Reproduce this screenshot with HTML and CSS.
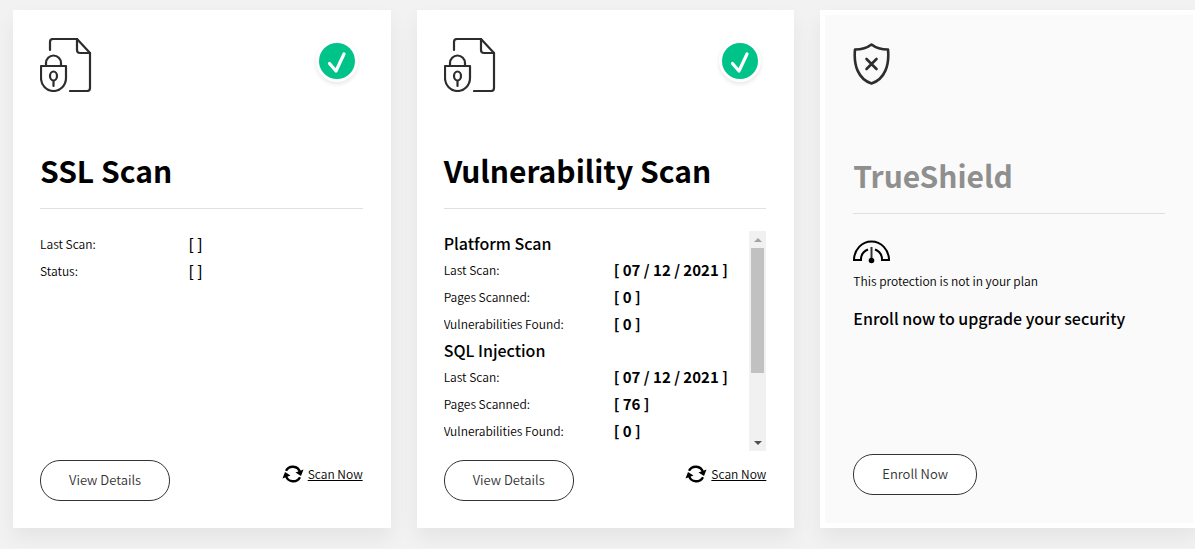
FILE: index.html
```html
<!DOCTYPE html>
<html lang="en">
<head>
<meta charset="utf-8">
<title>Security Dashboard</title>
<link rel="stylesheet" href="styles.css">
</head>
<body>

<!-- shared icons -->
<svg class="sprite" aria-hidden="true">
  <symbol id="icon-file-lock" viewBox="0 0 52 54">
    <g fill="none" stroke="#2d2d2d" stroke-width="2.200" stroke-linecap="round" stroke-linejoin="round">
      <path d="M10 12V4q0-3 3-3H37L50 15V50q0 3-3 3H30"/>
      <path d="M37 1V12q0 3 3 3H50"/>
      <path d="M1 28H26V40a12.500 13 0 0 1-25 0Z"/>
      <path d="M6 28V25a7.500 7.500 0 0 1 15 0v3"/>
      <ellipse cx="13.500" cy="38" rx="3.500" ry="4.500"/>
      <path d="M13.500 43v5"/>
    </g>
  </symbol>
  <symbol id="icon-check" viewBox="0 0 36 36">
    <circle cx="18" cy="18" r="18" fill="#00c389"/>
    <path d="M10.500 20.500l6.500 7.500L25 11" fill="none" stroke="#fff" stroke-width="3.200" stroke-linecap="round" stroke-linejoin="round"/>
  </symbol>
  <symbol id="icon-refresh" viewBox="0 0 22 18">
    <g fill="none" stroke="#000" stroke-width="2.400">
      <path d="M4 5.800A7.600 7.600 0 0 1 18 7"/>
      <path d="M18 12.200A7.600 7.600 0 0 1 4 11"/>
    </g>
    <path d="M21.500 4.500L19 11L13.500 7.500Z"/>
    <path d="M0.500 13.500L3 7L8.500 10.500Z"/>
  </symbol>
</svg>

<div class="cards">

  <section class="card">
    <div class="card-top">
      <svg class="icon-file" aria-hidden="true"><use href="#icon-file-lock"/></svg>
      <span class="badge"><svg aria-hidden="true"><use href="#icon-check"/></svg></span>
    </div>
    <h2>SSL Scan</h2>
    <div class="card-body">
      <div class="scroll-content">
        <dl class="rows">
          <dt>Last Scan:</dt><dd>[ ]</dd>
          <dt>Status:</dt><dd>[ ]</dd>
        </dl>
      </div>
    </div>
    <div class="card-footer">
      <button class="btn" type="button">View Details</button>
      <a class="scan-link" href="#"><svg aria-hidden="true"><use href="#icon-refresh"/></svg><span>Scan Now</span></a>
    </div>
  </section>

  <section class="card">
    <div class="card-top">
      <svg class="icon-file" aria-hidden="true"><use href="#icon-file-lock"/></svg>
      <span class="badge"><svg aria-hidden="true"><use href="#icon-check"/></svg></span>
    </div>
    <h2>Vulnerability Scan</h2>
    <div class="card-body">
      <div class="scroll-content">
        <h3>Platform Scan</h3>
        <dl class="rows wide">
          <dt>Last Scan:</dt><dd>[ 07 / 12 / 2021 ]</dd>
          <dt>Pages Scanned:</dt><dd>[ 0 ]</dd>
          <dt>Vulnerabilities Found:</dt><dd>[ 0 ]</dd>
        </dl>
        <h3>SQL Injection</h3>
        <dl class="rows wide">
          <dt>Last Scan:</dt><dd>[ 07 / 12 / 2021 ]</dd>
          <dt>Pages Scanned:</dt><dd>[ 76 ]</dd>
          <dt>Vulnerabilities Found:</dt><dd>[ 0 ]</dd>
        </dl>
      </div>
      <div class="scrollbar" aria-hidden="true">
        <span class="arrow up"></span>
        <div class="track"><div class="thumb"></div></div>
        <span class="arrow down"></span>
      </div>
    </div>
    <div class="card-footer">
      <button class="btn" type="button">View Details</button>
      <a class="scan-link" href="#"><svg aria-hidden="true"><use href="#icon-refresh"/></svg><span>Scan Now</span></a>
    </div>
  </section>

  <section class="card disabled">
    <div class="card-top">
      <svg class="icon-shield" viewBox="0 0 37 42" aria-hidden="true">
        <g fill="none" stroke="#2d2d2d" stroke-width="2.600" stroke-linecap="round" stroke-linejoin="round">
          <path d="M18.500 1.500C14 5 8 6.500 2 6.500C0.500 22 5 36 18.500 40.500C32 36 36.500 22 35 6.500C29 6.500 23 5 18.500 1.500Z"/>
          <path d="M13.500 16l10 10M23.500 16l-10 10"/>
        </g>
      </svg>
    </div>
    <h2>TrueShield</h2>
    <div class="plan">
      <svg class="icon-gauge" viewBox="0 0 37 24" aria-hidden="true">
        <g fill="none" stroke="#000" stroke-width="2">
          <path d="M15 9.500A11 11 0 0 0 8 20H1a17.500 18.500 0 0 1 35 0H29A11 11 0 0 0 22 9.500"/>
          <path d="M18.500 7v13" stroke="#333"/>
        </g>
        <circle cx="18.500" cy="20.500" r="2.800"/>
      </svg>
      <p class="note">This protection is not in your plan</p>
      <p class="upgrade">Enroll now to upgrade your security</p>
    </div>
    <div class="card-footer">
      <button class="btn" type="button">Enroll Now</button>
    </div>
  </section>

</div>

</body>
</html>
```
FILE: styles.css
```css
* {
  box-sizing: border-box;
}

body {
  margin: 0;
  background-color: #f2f2f2;
  color: #000;
  font-family: "Noto Sans CJK SC", "Open Sans", sans-serif;
  font-size: 12px;
  font-weight: 350;
  overflow: hidden;
}

.sprite {
  display: none;
}

.cards {
  display: grid;
  grid-template-columns: repeat(3, 1fr);
  gap: 26px;
  margin: 10px -3px 20px 13px; /* last column runs into the gutter */
}

.card {
  display: flex;
  flex-direction: column;
  padding: 28px 28px 27px 27px;
  background-color: #fff;
  box-shadow: 0 10px 20px rgba(0, 0, 0, 0.06);
}

.card.disabled {
  padding: 28px;
  border: 5px solid #fff;
  background-color: #fafafa;
}

.card-top {
  display: flex;
  justify-content: space-between;
  align-items: flex-start;
  height: 108px;
}

.icon-file {
  width: 52px;
  height: 54px;
}

.icon-shield {
  width: 37px;
  height: 42px;
}

.badge {
  display: flex;
  margin: 2px 5px 0 0;
  padding: 3px;
  border-radius: 50%;
  background-color: #fff;
  box-shadow: 0 2px 4px rgba(0, 0, 0, 0.1);
}

.badge svg {
  width: 36px;
  height: 36px;
}

h2 {
  margin: 0;
  padding-bottom: 14px;
  border-bottom: 1px solid #e0e0e0;
  font-size: 30px;
  font-weight: 700;
  line-height: 48px;
}

.disabled h2 {
  color: #8f8f8f;
}

.card-body {
  display: flex;
  height: 220px;
  margin-top: 22px;
}

.scroll-content {
  flex: 1;
  margin-top: -1px;
  overflow: hidden;
}

h3 {
  margin: 0;
  font-size: 16px;
  font-weight: 500;
  line-height: 26px;
}

.rows {
  display: grid;
  grid-template-columns: 46% 1fr;
  margin: 0;
  line-height: 27px;
}

.rows.wide {
  grid-template-columns: 170px 1fr;
}

.rows dd {
  margin: 0;
  font-size: 15px;
  font-weight: 500;
}

.rows.wide dd {
  font-weight: 700;
}

.scrollbar {
  display: flex;
  flex-direction: column;
  width: 17px;
  background-color: #f1f1f1;
}

.track {
  flex: 1;
  padding: 0 2px;
}

.thumb {
  height: 67%;
  background-color: #c1c1c1;
}

.arrow {
  display: flex;
  justify-content: center;
  align-items: center;
  height: 17px;
}

.arrow::before {
  content: "";
  border: 4px solid transparent;
}

.arrow.up::before {
  border-top: 0;
  border-bottom-color: #a3a3a3;
}

.arrow.down::before {
  border-bottom: 0;
  border-top-color: #505050;
}

.plan {
  margin-top: 26px;
}

.note {
  margin: 7px 0 0;
  line-height: 20px;
}

.upgrade {
  margin: 14px 0 0;
  font-size: 16px;
  font-weight: 500;
  line-height: 26px;
}

.icon-gauge {
  display: block;
  width: 37px;
  height: 24px;
}

.card-footer {
  display: flex;
  justify-content: space-between;
  align-items: flex-start;
  margin-top: auto;
  padding-top: 9px;
}

.btn {
  height: 41px;
  padding: 0 28px 2px;
  border: 1px solid #333;
  border-radius: 20px;
  background-color: #fff;
  color: #333;
  font-family: inherit;
  font-size: 13px;
  font-weight: 350;
  cursor: pointer;
}

.scan-link {
  display: flex;
  align-items: center;
  gap: 4px;
  margin-top: 4px;
  color: #000;
  line-height: 20px;
}

.scan-link svg {
  width: 22px;
  height: 18px;
}
```
